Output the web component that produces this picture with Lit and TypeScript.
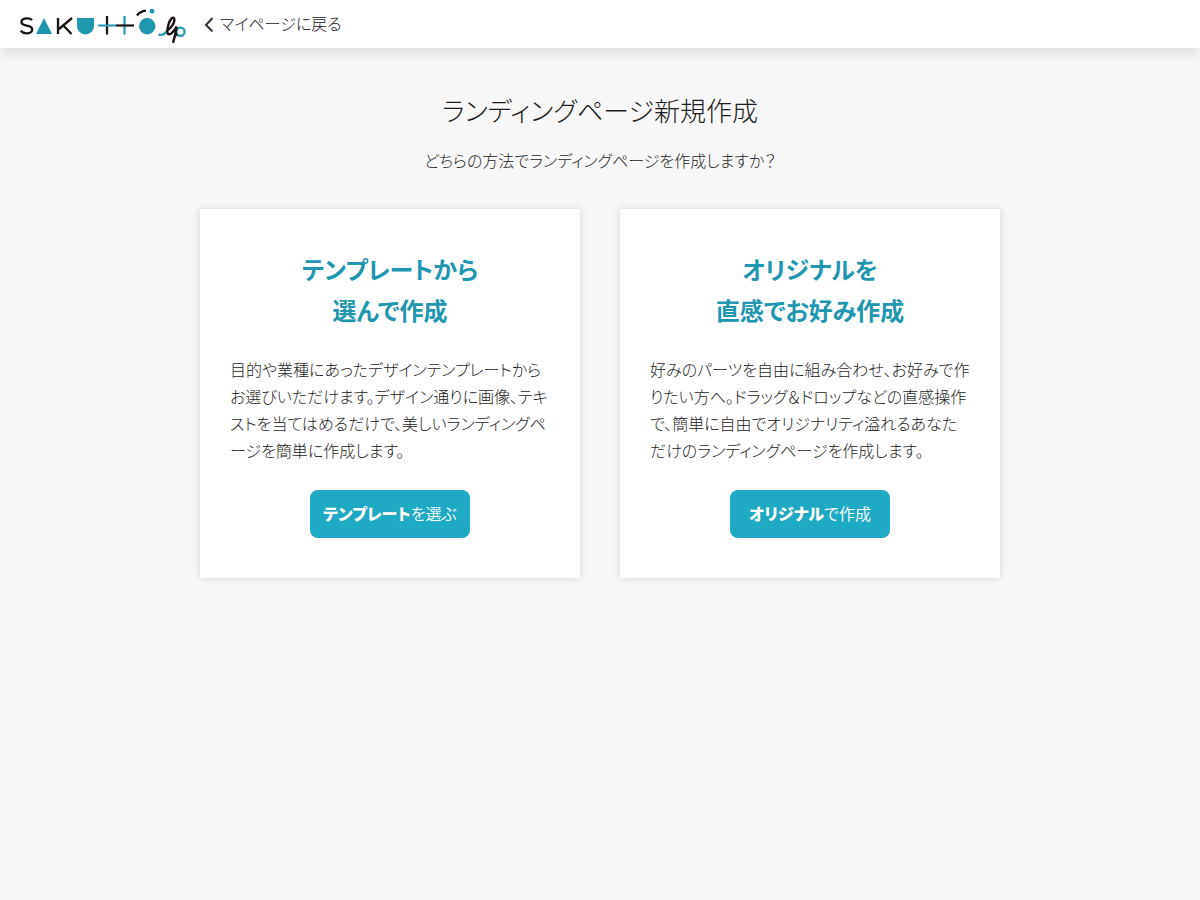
import { LitElement, html, css, svg } from "lit";
import { customElement, property } from "lit/decorators.js";

interface Method {
  heading: [string, string];
  body: string;
  strong: string;
  rest: string;
}

const METHODS: Method[] = [
  {
    heading: ["テンプレートから", "選んで作成"],
    body: "目的や業種にあったデザインテンプレートからお選びいただけます。デザイン通りに画像、テキストを当てはめるだけで、美しいランディングページを簡単に作成します。",
    strong: "テンプレート",
    rest: "を選ぶ",
  },
  {
    heading: ["オリジナルを", "直感でお好み作成"],
    body: "好みのパーツを自由に組み合わせ、お好みで作りたい方へ。ドラッグ＆ドロップなどの直感操作で、簡単に自由でオリジナリティ溢れるあなただけのランディングページを作成します。",
    strong: "オリジナル",
    rest: "で作成",
  },
];

const logo = svg`
  <g fill="none" stroke="#1a1414" stroke-width="2.300">
    <path d="M12 20.2C11 18.8 9.3 18.4 7.200 18.400C3.600 18.400 1.400 19.800 1.400 22C1.400 24.400 3.800 25.100 6.800 25.700C10 26.300 12.200 27 12.200 29.500C12.200 31.900 9.700 33.300 6.700 33.300C4 33.300 2 32.500 .8 30.700"/>
    <path d="M38 18V34M52 18L39 29M43.500 25.500L51.500 34"/>
    <path d="M87 16V34.500"/>
    <path d="M117 15.500C119 12.500 122 11 126 10.600"/>
  </g>
  <g fill="#2196b0">
    <path d="M24 18L32 34H16Z"/>
    <path d="M57 18H74V26A8.500 8.500 0 0 1 57 26Z"/>
    <circle cx="127.200" cy="26.200" r="8.200"/>
    <circle cx="132" cy="11.200" r="2.400"/>
  </g>
  <g fill="none" stroke="#2196b0" stroke-width="2.200">
    <path d="M78 25.500H96M104.500 16V34.500"/>
    <path d="M138.500 34.600C142 35.600 144.500 34.500 147 31"/>
    <circle cx="160.500" cy="31.700" r="4.100"/>
  </g>
  <path d="M96 25.500H114" stroke="#1a1414" stroke-width="2.200"/>
  <path d="M146.500 31C151 28.500 155 22.500 154.300 19C153.500 15.800 150.300 18.500 148.600 24C147 29.500 146.600 34.300 149.200 34.300C151.500 34.300 154 31 156.600 26.500C156 32 154.500 38 153 42.800M156 29C155 31.500 155 34.500 157.500 35.300" fill="none" stroke="#1a1414" stroke-width="2.400"/>
`;

@customElement("method-card")
class MethodCard extends LitElement {
  @property({ attribute: false }) method!: Method;

  static styles = css`
    :host {
      display: flex;
      flex-direction: column;
      align-items: center;
      box-sizing: border-box;
      padding: 39px 30px 40px;
      background: #fff;
      box-shadow: 0 0 8px rgba(0, 0, 0, 0.15);
    }
    .heading {
      margin: 0 0 26px;
      color: #2196b0;
      font-size: 24px;
      font-weight: 700;
      line-height: 41px;
      text-align: center;
    }
    .line {
      display: block;
    }
    .body {
      margin: 0 0 26px;
      line-height: 27px;
    }
    .button {
      width: 160px;
      height: 48px;
      padding: 0 0 2px;
      border: 0;
      border-radius: 8px;
      background: #20a9c5;
      color: #fff;
      font: inherit;
      font-weight: 350;
      font-feature-settings: inherit;
      line-height: 24px;
      cursor: pointer;
    }
    .strong {
      font-weight: 900;
    }
  `;

  render() {
    const m = this.method;
    return html`
      <h2 class="heading">${m.heading.map((t) => html`<span class="line">${t}</span>`)}</h2>
      <p class="body">${m.body}</p>
      <button class="button" type="button"><b class="strong">${m.strong}</b>${m.rest}</button>
    `;
  }
}

@customElement("app-root")
class AppRoot extends LitElement {
  static styles = css`
    :host {
      display: block;
      min-height: 100vh;
      background: #f8f8f8;
      color: #1c1c22;
      font-family: "Noto Sans CJK JP", sans-serif;
      font-size: 16px;
      font-weight: 300;
      line-height: 27px;
      font-feature-settings: "palt";
    }
    .header {
      display: flex;
      align-items: center;
      gap: 18px;
      height: 48px;
      padding: 0 20px;
      background: #fff;
      box-shadow: 0 8px 10px rgba(0, 0, 0, 0.09);
    }
    .logo,
    .logo svg {
      display: block;
    }
    .back {
      display: flex;
      align-items: center;
      gap: 6px;
      color: inherit;
      line-height: 24px;
      text-decoration: none;
    }
    .back-label {
      padding-bottom: 2px;
    }
    .main {
      box-sizing: border-box;
      max-width: 840px;
      margin: 0 auto;
      padding: 40px 20px;
      text-align: center;
    }
    .title {
      margin: 0 0 15px;
      font-size: 26px;
      font-weight: 300;
      line-height: 44px;
    }
    .lead {
      margin: 0 0 35px;
    }
    .cards {
      display: grid;
      grid-template-columns: repeat(auto-fit, minmax(300px, 1fr));
      gap: 40px;
      text-align: left;
    }
  `;

  render() {
    return html`
      <header class="header">
        <a class="logo" href="#" aria-label="SAKUTTO LP">
          <svg width="166" height="48" viewBox="0 0 166 48" aria-hidden="true">${logo}</svg>
        </a>
        <a class="back" href="#">
          <svg width="10" height="16" viewBox="0 0 10 16" fill="none" stroke="#333338" stroke-width="2" aria-hidden="true">
            <path d="M8.500 2L2 9L8.500 15.500" />
          </svg>
          <span class="back-label">マイページに戻る</span>
        </a>
      </header>
      <main class="main">
        <h1 class="title">ランディングページ新規作成</h1>
        <p class="lead">どちらの方法でランディングページを作成しますか？</p>
        <div class="cards">${METHODS.map((m) => html`<method-card .method=${m}></method-card>`)}</div>
      </main>
    `;
  }
}
